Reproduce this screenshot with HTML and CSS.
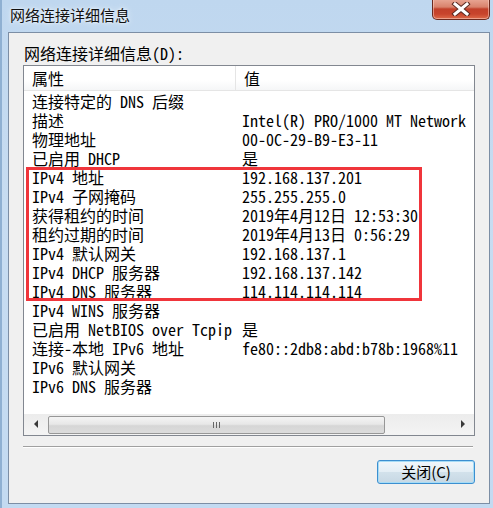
FILE: index.html
```html
<!DOCTYPE html>
<html lang="zh-CN">
<head>
  <meta charset="UTF-8">
  <title>网络连接详细信息</title>
  <link rel="stylesheet" href="styles.css">
</head>
<body>
  <div class="window">
    <div class="titlebar">
      <span class="title">网络连接详细信息</span>
      <div class="close-btn">
        <svg width="22" height="14" viewBox="0 0 22 14">
          <path d="M5 2 L17 12 M17 2 L5 12" stroke="#5a2a22" stroke-width="5" stroke-linecap="square"/>
          <path d="M5 2 L17 12 M17 2 L5 12" stroke="#ffffff" stroke-width="3" stroke-linecap="square"/>
        </svg>
      </div>
    </div>

    <div class="client">
      <div class="label">网络连接详细信息(D):</div>

      <div class="listview">
        <div class="lv-header">
          <div class="col col-prop">属性</div>
          <div class="col col-val">值</div>
        </div>
        <div class="lv-body">
          <div class="row"><span class="prop">连接特定的 DNS 后缀</span><span class="val"></span></div>
          <div class="row"><span class="prop">描述</span><span class="val">Intel(R) PRO/1000 MT Network</span></div>
          <div class="row"><span class="prop">物理地址</span><span class="val">00-0C-29-B9-E3-11</span></div>
          <div class="row"><span class="prop">已启用 DHCP</span><span class="val">是</span></div>
          <div class="row"><span class="prop">IPv4 地址</span><span class="val">192.168.137.201</span></div>
          <div class="row"><span class="prop">IPv4 子网掩码</span><span class="val">255.255.255.0</span></div>
          <div class="row"><span class="prop">获得租约的时间</span><span class="val">2019年4月12日 12:53:30</span></div>
          <div class="row"><span class="prop">租约过期的时间</span><span class="val">2019年4月13日 0:56:29</span></div>
          <div class="row"><span class="prop">IPv4 默认网关</span><span class="val">192.168.137.1</span></div>
          <div class="row"><span class="prop">IPv4 DHCP 服务器</span><span class="val">192.168.137.142</span></div>
          <div class="row"><span class="prop">IPv4 DNS 服务器</span><span class="val">114.114.114.114</span></div>
          <div class="row"><span class="prop">IPv4 WINS 服务器</span><span class="val"></span></div>
          <div class="row"><span class="prop">已启用 NetBIOS over Tcpip</span><span class="val">是</span></div>
          <div class="row"><span class="prop">连接-本地 IPv6 地址</span><span class="val">fe80::2db8:abd:b78b:1968%11</span></div>
          <div class="row"><span class="prop">IPv6 默认网关</span><span class="val"></span></div>
          <div class="row"><span class="prop">IPv6 DNS 服务器</span><span class="val"></span></div>
        </div>
        <div class="hscroll">
          <div class="arrow arrow-left"></div>
          <div class="track">
            <div class="thumb"><span class="grip"></span></div>
          </div>
          <div class="arrow arrow-right"></div>
        </div>
        <div class="highlight"></div>
      </div>

      <div class="separator"></div>

      <div class="actions">
        <div class="button">关闭(C)</div>
      </div>
    </div>
  </div>
</body>
</html>
```

FILE: styles.css
```css
body {
  margin: 0;
  padding: 0;
  width: 493px;
  height: 508px;
  overflow: hidden;
  background: #bcd6f0;
}

.window {
  width: 493px;
  height: 508px;
  box-sizing: border-box;
  background: linear-gradient(to bottom, #bfd7ef 0%, #c7dcf1 40%, #c3daf1 100%);
  border-left: 2px solid #8fb0d2;
  display: flex;
  flex-direction: column;
}

.titlebar {
  height: 32px;
  position: relative;
  display: flex;
  align-items: flex-start;
}

.title {
  font-family: "Noto Sans CJK SC", sans-serif;
  font-size: 15px;
  line-height: 20px;
  padding: 5px 0 0 8px;
  color: #111;
  text-shadow: 0 0 6px #eaf3fb, 0 0 3px #ffffff;
}

.close-btn {
  position: absolute;
  top: -1px;
  right: 3px;
  width: 58px;
  height: 21px;
  box-sizing: border-box;
  border: 1px solid #6b2a1f;
  border-top: none;
  border-radius: 0 0 5px 5px;
  background: linear-gradient(to bottom, #e9a896 0%, #d9826c 40%, #c2402a 50%, #c8442c 75%, #dd6b4a 100%);
  box-shadow: inset 0 0 0 1px rgba(255, 220, 210, 0.5);
  display: flex;
  justify-content: center;
  align-items: center;
}

.client {
  margin-left: 6px;
  width: 482px;
  height: 472px;
  box-sizing: border-box;
  background: #f0f0f0;
  border: 1px solid #7c8ea5;
  padding: 10px 0 0 14px;
  font-family: "Noto Sans Mono CJK SC", "Noto Sans CJK SC", monospace;
  font-size: 16px;
  color: #000;
}

.label {
  height: 20px;
  line-height: 20px;
  padding-left: 1px;
  margin-bottom: 2px;
}

.listview {
  position: relative;
  width: 452px;
  height: 371px;
  box-sizing: border-box;
  background: #fff;
  border: 1px solid #828790;
  display: flex;
  flex-direction: column;
}

.lv-header {
  height: 24px;
  display: flex;
  background: linear-gradient(to bottom, #ffffff 0%, #ffffff 60%, #f5f6f7 100%);
  border-bottom: 1px solid #e5e5e5;
}

.col {
  line-height: 24px;
  box-sizing: border-box;
}

.col-prop {
  width: 212px;
  padding-left: 8px;
  border-right: 1px solid #e5e5e5;
}

.col-val {
  padding-left: 8px;
}

.lv-body {
  flex: 1;
  padding-top: 1px;
}

.row {
  display: flex;
  height: 19px;
  line-height: 19px;
  white-space: nowrap;
}

.prop {
  width: 212px;
  padding-left: 8px;
  box-sizing: border-box;
}

.val {
  padding-left: 6px;
}

.hscroll {
  height: 21px;
  display: flex;
  align-items: center;
  background: linear-gradient(to bottom, #ececec, #f4f4f4);
}

.arrow {
  width: 24px;
  height: 21px;
  position: relative;
}

.arrow-left::after,
.arrow-right::after {
  content: "";
  position: absolute;
  top: 6px;
  border-top: 4px solid transparent;
  border-bottom: 4px solid transparent;
}

.arrow-left::after {
  left: 10px;
  border-right: 4px solid #3a3a3a;
}

.arrow-right::after {
  right: 9px;
  border-left: 4px solid #3a3a3a;
}

.track {
  flex: 1;
  height: 21px;
  display: flex;
  align-items: center;
}

.thumb {
  width: 337px;
  height: 18px;
  box-sizing: border-box;
  border: 1px solid #979797;
  border-radius: 2px;
  background: linear-gradient(to bottom, #f4f4f4 0%, #e8e8e8 45%, #d6d6d6 55%, #dcdcdc 100%);
  display: flex;
  justify-content: center;
  align-items: center;
}

.grip {
  width: 7px;
  height: 6px;
  background: repeating-linear-gradient(to right, #666 0, #666 1px, transparent 1px, transparent 3px);
}

.highlight {
  position: absolute;
  left: 2px;
  top: 101px;
  width: 396px;
  height: 134px;
  box-sizing: border-box;
  border: 3px solid #f0353b;
}

.separator {
  width: 450px;
  height: 0;
  border-top: 1px solid #a0a0a0;
  border-bottom: 1px solid #ffffff;
  margin-top: 10px;
}

.actions {
  width: 452px;
  display: flex;
  justify-content: flex-end;
  padding-top: 12px;
}

.button {
  width: 98px;
  height: 24px;
  box-sizing: border-box;
  border: 1px solid #3c8fd0;
  border-radius: 3px;
  box-shadow: inset 0 0 0 1px #a6dcf6;
  background: linear-gradient(to bottom, #f1f7fb 0%, #e4eef5 48%, #d2e1eb 52%, #c7d8e4 100%);
  font-family: "Noto Sans CJK SC", sans-serif;
  font-size: 15px;
  line-height: 22px;
  text-align: center;
  color: #000;
}
```
